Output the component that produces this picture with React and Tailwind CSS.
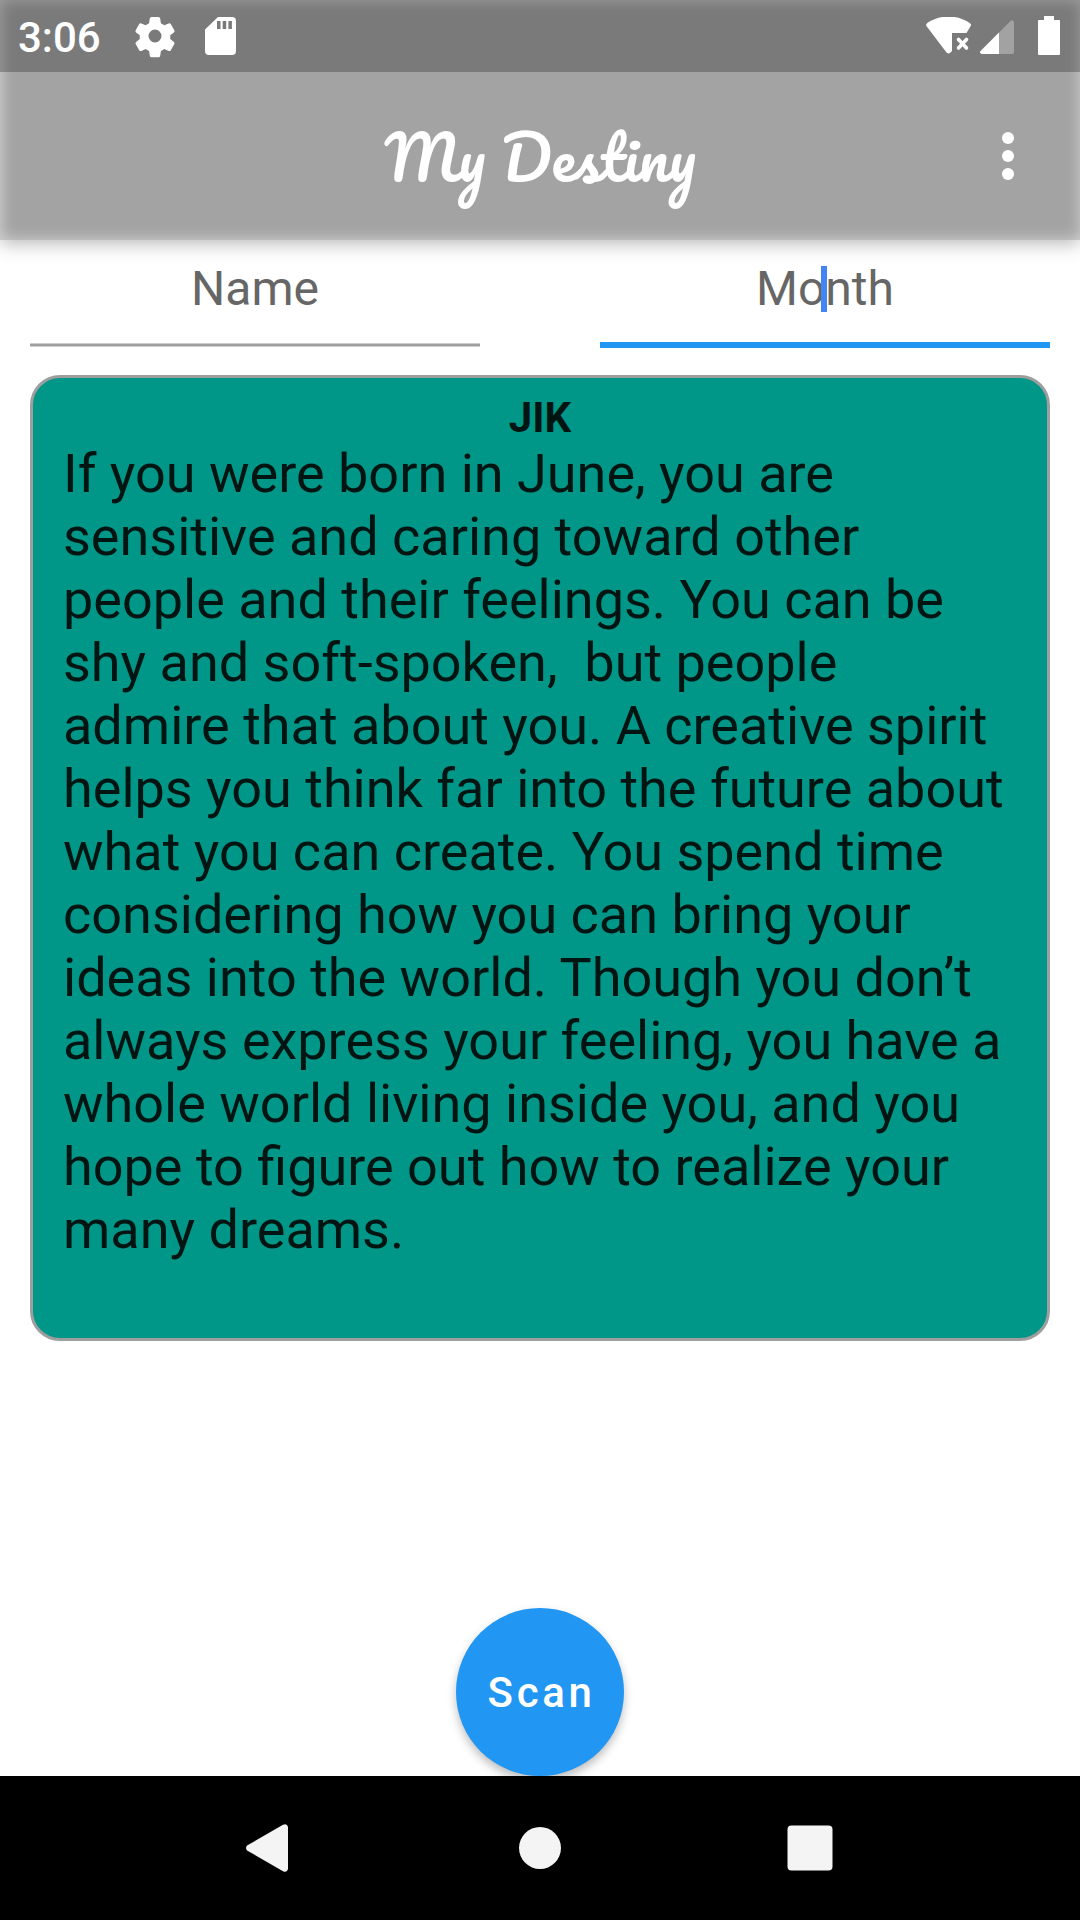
const fortune =
  'If you were born in June, you are sensitive and caring toward other people and their feelings. You can be shy and soft-spoken,  but people admire that about you. A creative spirit helps you think far into the future about what you can create. You spend time considering how you can bring your ideas into the world. Though you don’t always express your feeling, you have a whole world living inside you, and you hope to figure out how to realize your many dreams.';

function StatusBar() {
  return (
    <div className="flex h-[72px] items-start justify-between bg-black/25 text-white">
      <div className="flex items-start">
        <span className="w-[118px] pl-[18px] pt-[13px] text-[42px] font-medium leading-[50px]">3:06</span>
        <svg className="ml-3 mt-[11px] h-[50px] w-[50px]" viewBox="0 0 50 50" fill="currentColor">
          <path
            fillRule="evenodd"
            d="M21.500 6h7q1.500 0 1.700 1.500l.7 4.700q1.800.8 3.400 2l4.400-1.800q1.400-.5 2.100.7l3.500 6.100q.7 1.300-.4 2.200l-3.700 2.800q.2 2 0 3.900l3.700 2.900q1.100.9.4 2.100l-3.500 6.100q-.7 1.200-2.100.7l-4.400-1.800q-1.600 1.200-3.400 2l-.7 4.700q-.2 1.500-1.700 1.500h-7q-1.500 0-1.700-1.500l-.7-4.700q-1.800-.8-3.400-2l-4.400 1.800q-1.400.5-2.100-.7l-3.500-6.100q-.7-1.200.4-2.100l3.700-2.900q-.2-2 0-3.900l-3.700-2.800q-1.100-.9-.4-2.200l3.500-6.100q.7-1.200 2.100-.7l4.400 1.800q1.600-1.200 3.400-2l.7-4.700Q20 6 21.500 6zM25 18.500a6.500 6.500 0 1 0 0 13 6.500 6.500 0 0 0 0-13z"
          />
        </svg>
        <svg className="ml-[25px] mt-[17px] h-[38px] w-[31px]" viewBox="0 0 31 38" fill="currentColor">
          <path fillRule="evenodd" d="M13 0h14a4 4 0 0 1 4 4v30a4 4 0 0 1-4 4H4a4 4 0 0 1-4-4V12.500zM12 4v8h3.500V4zM17.700 4v8h3.500V4zM23.400 4v8h3.500V4z" />
        </svg>
      </div>
      <div className="flex items-start">
        <svg className="mt-[17px] h-[37px] w-[46px]" viewBox="0 0 46 37" fill="currentColor">
          <path d="M.8 9.500C-.3 8 .1 7 1.300 6A38 38 0 0 1 43.700 6C45.200 7 45.400 8 44.400 9.500L40.500 16H26V34L24.500 35.600Q22.500 37.500 20.500 35.600z" />
          <path d="M32.500 22.500l8 8.500M40.500 22.500l-8 8.500" fill="none" stroke="currentColor" strokeWidth="3.600" strokeLinecap="round" />
        </svg>
        <svg className="ml-2 mt-5 h-[34px] w-[34px]" viewBox="0 0 34 34" fill="currentColor">
          <path d="M34 2v30a2 2 0 0 1-2 2H2Q-1 33 .6 31L31 .6Q33-.8 34 2z" fillOpacity="0.3" />
          <path d="M19 12.600V34H2Q-1 33 .6 31z" />
        </svg>
        <svg className="ml-6 mr-5 mt-4 h-[39px] w-[22px]" viewBox="0 0 22 39" fill="currentColor">
          <path d="M6 0h10v4h5a1 1 0 0 1 1 1v33a1 1 0 0 1-1 1H1a1 1 0 0 1-1-1V5a1 1 0 0 1 1-1h5z" />
        </svg>
      </div>
    </div>
  );
}

function AppBar() {
  return (
    <div className="grid h-[168px] grid-cols-[1fr_auto_1fr] items-center text-white">
      <span />
      <h1 className="whitespace-nowrap pt-0.5 font-[Pacifico,cursive] text-[60px] leading-none">My Destiny</h1>
      <div className="flex flex-col items-center gap-1.5 justify-self-end pr-[66px]">
        <span className="h-3 w-3 rounded-full bg-white" />
        <span className="h-3 w-3 rounded-full bg-white" />
        <span className="h-3 w-3 rounded-full bg-white" />
      </div>
    </div>
  );
}

function Field({ label, focused }) {
  return (
    <div className="flex h-[108px] w-[450px] flex-col justify-between">
      <div className="relative self-center pt-[21px] text-[48px] leading-[56px] text-[#666666]">
        {label}
        {focused && <span className="absolute left-1/2 top-[26px] h-[46px] w-1.5 -translate-x-[4px] bg-[#4285f4]" />}
      </div>
      {focused ? (
        <div className="h-1.5 bg-[#2196f3]" />
      ) : (
        <div className="mb-px h-1 border-y border-[#cecece] bg-[#9e9e9e]" />
      )}
    </div>
  );
}

function NavBar() {
  return (
    <div className="flex h-36 items-center justify-center bg-black text-[#f4f4f4]">
      <div className="flex w-[270px] justify-center pr-[6px]">
        <svg className="h-12 w-[42px]" viewBox="0 0 42 48" fill="currentColor">
          <path d="M1 21.600L37 .8Q41-1 42 3v42q-1 4-5 2.200L1 26.400Q-1 24 1 21.600z" />
        </svg>
      </div>
      <div className="flex w-[270px] justify-center">
        <div className="h-[42px] w-[42px] rounded-full bg-[#f4f4f4]" />
      </div>
      <div className="flex w-[270px] justify-center">
        <svg className="h-[46px] w-[46px]" viewBox="0 0 46 46" fill="currentColor">
          <rect x="0.500" y="0.500" width="45" height="45" rx="4" />
        </svg>
      </div>
    </div>
  );
}

export default function App() {
  return (
    <div className="flex h-[1920px] w-[1080px] flex-col overflow-hidden bg-white font-[Roboto,sans-serif]">
      <header className="h-60 shrink-0 bg-[#a3a3a3] shadow-[0_3px_18px_rgba(0,0,0,0.3),inset_1px_0_15px_rgba(255,255,255,0.55)]">
        <StatusBar />
        <AppBar />
      </header>

      <main className="flex flex-1 flex-col px-[30px]">
        <div className="flex justify-between">
          <Field label="Name" />
          <Field label="Month" focused />
        </div>

        <section className="mt-[27px] h-[966px] rounded-[30px] border-[3px] border-[#9e9e9e] bg-[#009688] px-[30px] pt-[15px] text-[#001512]">
          <h2 className="text-center text-[42px] font-bold leading-[49px]">JIK</h2>
          <p className="whitespace-pre-wrap text-[54px] leading-[63px]">{fortune}</p>
        </section>

        <button className="mt-auto h-[168px] w-[168px] self-center rounded-full bg-[#2196f3] pl-[3px] text-[42px] font-medium tracking-[3.600px] text-white shadow-[0_5px_10px_rgba(0,0,0,0.26)]">
          Scan
        </button>
      </main>

      <NavBar />
    </div>
  );
}
